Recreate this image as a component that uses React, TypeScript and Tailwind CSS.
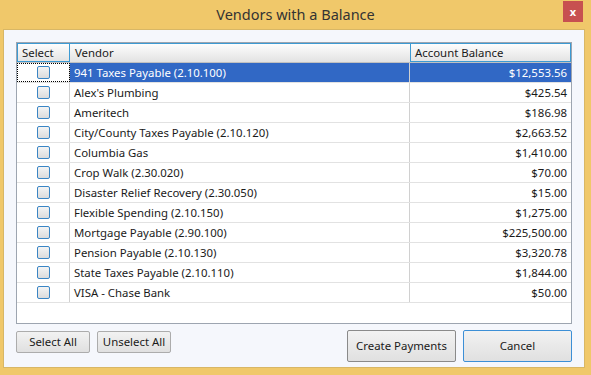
import React from "react";

const rows: [string, string][] = [
  ["941 Taxes Payable (2.10.100)", "$12,553.56"],
  ["Alex's Plumbing", "$425.54"],
  ["Ameritech", "$186.98"],
  ["City/County Taxes Payable (2.10.120)", "$2,663.52"],
  ["Columbia Gas", "$1,410.00"],
  ["Crop Walk (2.30.020)", "$70.00"],
  ["Disaster Relief Recovery (2.30.050)", "$15.00"],
  ["Flexible Spending (2.10.150)", "$1,275.00"],
  ["Mortgage Payable (2.90.100)", "$225,500.00"],
  ["Pension Payable (2.10.130)", "$3,320.78"],
  ["State Taxes Payable (2.10.110)", "$1,844.00"],
  ["VISA - Chase Bank", "$50.00"],
];

function Check() {
  return (
    <div className="w-[13px] h-[13px] rounded-[2px] border border-[#3a85c4] bg-gradient-to-b from-[#f4f4f4] to-[#dcdcdc]" />
  );
}

export default function App() {
  return (
    <div
      className="w-[591px] h-[375px] bg-[#f0c86a] flex flex-col text-[#1a1a1a]"
      style={{ fontFamily: '"Noto Sans", "Open Sans", sans-serif' }}
    >
      <div className="h-[29px] flex items-start relative">
        <div className="flex-1 text-center text-[14.5px] leading-[28px] text-[#333]">Vendors with a Balance</div>
        <div className="absolute right-[8px] top-[1px] w-[20px] h-[21px] bg-[#c75050] flex items-center justify-center text-white text-[11px] font-bold leading-none">
          x
        </div>
      </div>
      <div className="ml-[3px] mr-[6px] h-[339px] bg-[#f5f7fc] border border-[#d8b766] px-[12px] pt-[12px]">
        <div className="h-[282px] border border-[#9da5b0] bg-white text-[11.4px] flex flex-col">
          <div className="flex h-[20px] bg-gradient-to-b from-[#ffffff] to-[#e2e2e2] border-b border-[#c0c0c0]">
            <div className="w-[53px] border border-[#3c9ad3] pl-[4px] leading-[18px]">Select</div>
            <div className="flex-1 border-t border-[#3c9ad3] pl-[5px] leading-[18px]">Vendor</div>
            <div className="w-[161px] border border-[#3c9ad3] pl-[4px] leading-[18px]">Account Balance</div>
          </div>
          {rows.map(([name, bal], i) => {
            const sel = i === 0;
            return (
              <div key={name} className="flex h-[20px] border-b border-[#e2e2e2]">
                <div className={`w-[53px] flex items-center justify-center border-r border-[#d0d0d0] ${sel ? "outline-1 outline-dotted outline-[#000] -outline-offset-1" : ""}`}>
                  <Check />
                </div>
                <div className={`flex-1 pl-[4px] leading-[19px] border-r border-[#d0d0d0] ${sel ? "bg-[#3168c5] text-white" : ""}`}>{name}</div>
                <div className={`w-[161px] pr-[4px] text-right leading-[19px] ${sel ? "bg-[#3168c5] text-white" : ""}`}>{bal}</div>
              </div>
            );
          })}
        </div>
        <div className="flex mt-[7px] text-[11.4px]">
          <div className="flex gap-[7px]">
            <button className="w-[74px] h-[22px] border border-[#acacac] rounded-[2px] bg-gradient-to-b from-[#f2f2f2] to-[#e0e0e0]">Select All</button>
            <button className="w-[74px] h-[22px] border border-[#acacac] rounded-[2px] bg-gradient-to-b from-[#f2f2f2] to-[#e0e0e0]">Unselect All</button>
          </div>
          <div className="flex-1" />
          <div className="flex gap-[7px] -mt-[1px]">
            <button className="w-[109px] h-[32px] border border-[#8a8a8a] rounded-[2px] bg-gradient-to-b from-[#f2f2f2] to-[#e0e0e0]">Create Payments</button>
            <button className="w-[109px] h-[32px] border border-[#3c8fd6] rounded-[2px] bg-gradient-to-b from-[#f2f2f2] to-[#e0e0e0]">Cancel</button>
          </div>
        </div>
      </div>
    </div>
  );
}
